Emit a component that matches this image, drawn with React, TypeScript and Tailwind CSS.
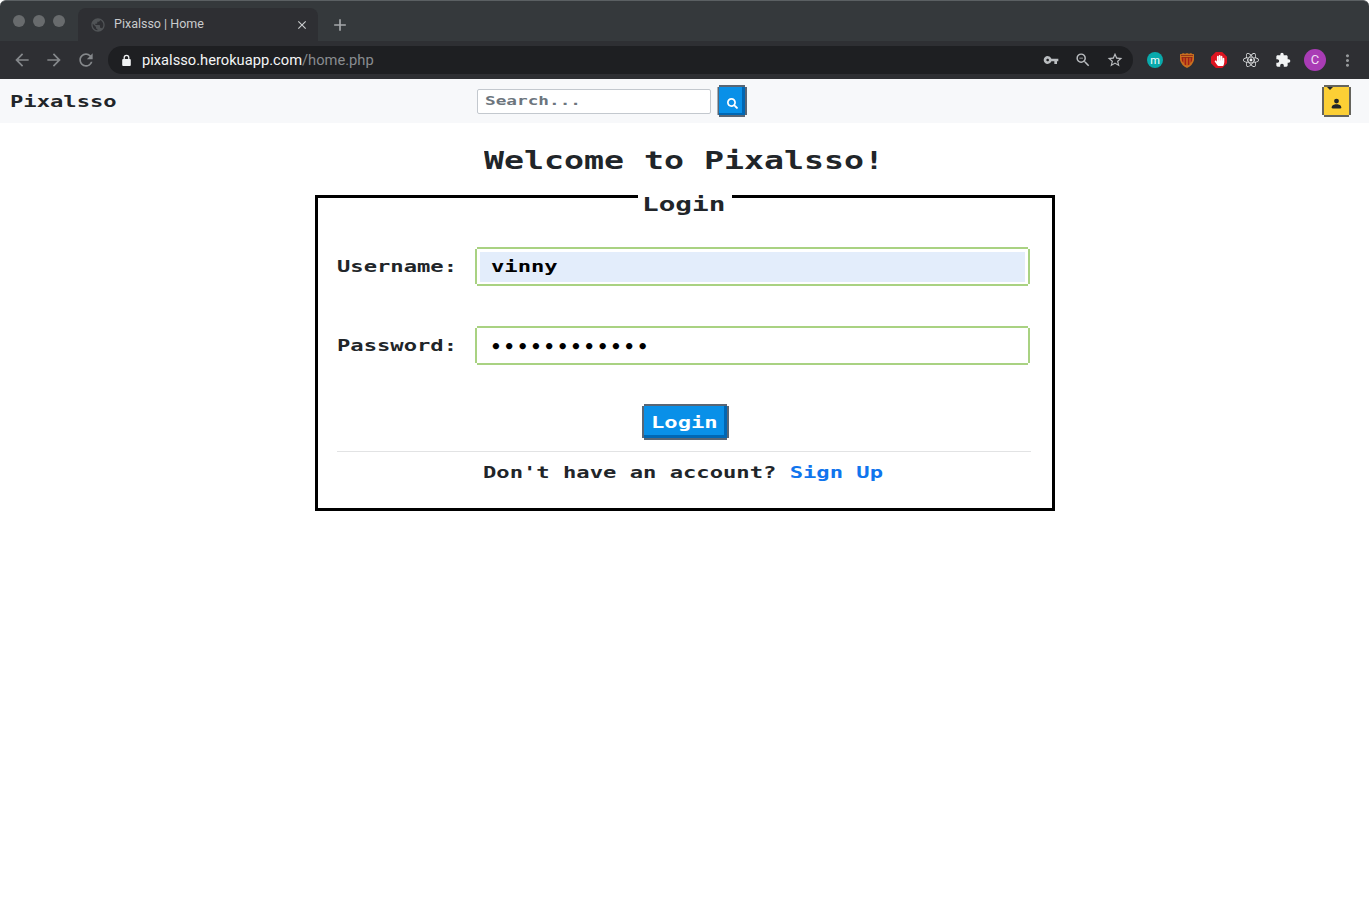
import React from "react";
import {
  MdAdd, MdArrowBack, MdArrowForward, MdClose, MdExtension, MdMoreVert,
  MdPublic, MdRefresh, MdStarBorder, MdVpnKey, MdZoomOut,
} from "react-icons/md";
import { FaHandPaper, FaReact, FaSearch } from "react-icons/fa";
import { BsPersonFill } from "react-icons/bs";

function Wide({ children, className = "" }: { children: React.ReactNode; className?: string }) {
  return (
    <span className={`block origin-left scale-x-[1.384] whitespace-pre font-['DejaVu_Sans_Mono','Liberation_Mono',monospace] font-bold ${className}`}>
      {children}
    </span>
  );
}

function Shield() {
  return (
    <svg className="size-4" viewBox="0 0 16 16">
      <path d="M1 2q2 .5 3-1 2 1.500 4 0 2 1.500 4 0 1 1.500 3 1v6q-1 5-7 8-6-3-7-8z" fill="#c9701f" />
      <path d="M2.500 5h2v6l-1.500-2zM5.500 5h1.800v8.500l-1.800-1zM8.700 5h1.800v7.500l-1.800 1zM11.500 5h2l-.5 4-1.500 2z" fill="#a51d16" />
      <path d="M2 3.500h12M3 5.500h10" stroke="#8c2a18" strokeWidth=".8" />
    </svg>
  );
}

function Padlock() {
  return (
    <svg className="h-[13px] w-[13px]" viewBox="0 0 13 13">
      <rect x="2.200" y="5" width="8.600" height="7" rx="1" fill="#f1f3f4" />
      <path d="M4.200 5.500V3.600a2.300 2.300 0 0 1 4.600 0v1.900" fill="none" stroke="#f1f3f4" strokeWidth="1.300" />
    </svg>
  );
}

function BrowserChrome() {
  return (
    <header className="h-[79px] overflow-hidden rounded-t-md border-t border-[#5b6063] bg-[#35393c] font-[Roboto,sans-serif]">
      <div className="flex h-10 items-end">
        <div className="flex w-[78px] gap-2 self-start pl-[13px] pt-[14px]">
          <span className="size-3 rounded-full bg-[#686b6d]" />
          <span className="size-3 rounded-full bg-[#686b6d]" />
          <span className="size-3 rounded-full bg-[#686b6d]" />
        </div>
        <div className="flex h-[33px] w-60 items-center rounded-t-lg bg-[#2e2f33] pl-3">
          <MdPublic className="size-4 text-[#505356]" />
          <span className="ml-2 flex-1 text-[12.5px] text-[#c9cbcd]">Pixalsso | Home</span>
          <MdClose className="mr-[9px] size-[14px] text-[#c9cbcd]" />
        </div>
        <div className="flex h-[33px] items-center pl-3">
          <MdAdd className="size-5 text-[#a5a8aa]" />
        </div>
      </div>
      <div className="flex h-[38px] items-center bg-[#2e2f33] pl-3">
        <MdArrowBack className="size-5 text-[#85888b]" />
        <MdArrowForward className="ml-3 size-5 text-[#85888b]" />
        <MdRefresh className="ml-3 size-5 text-[#85888b]" />
        <div className="ml-3 flex h-7 w-[1025px] items-center rounded-full bg-[#1e1f22] pl-3">
          <Padlock />
          <span className="ml-[9px] flex-1 text-[14.7px] text-[#898c90]">
            <span className="text-[#f4f5f6]">pixalsso.herokuapp.com</span>/home.php
          </span>
          <div className="flex gap-4 pr-2.5 text-[#babdc0]">
            <MdVpnKey className="size-4" />
            <MdZoomOut className="size-4 scale-110" />
            <MdStarBorder className="size-4 scale-110" />
          </div>
        </div>
        <div className="ml-3.5 flex items-center">
          <span className="flex size-4 items-center justify-center rounded-full bg-[#09aaac] text-[11px] leading-none text-white">m</span>
          <span className="ml-4"><Shield /></span>
          <span className="ml-4 flex size-4 items-center justify-center bg-[#dc1420] [clip-path:polygon(30%_0,70%_0,100%_30%,100%_70%,70%_100%,30%_100%,0_70%,0_30%)]">
            <FaHandPaper className="size-[11px] text-white" />
          </span>
          <FaReact className="ml-4 size-4 text-[#f1f3f4]" />
          <MdExtension className="ml-4 size-4 text-[#f1f3f4]" />
          <span className="ml-[13px] flex size-[22px] items-center justify-center rounded-full bg-[#a93cb5] text-[13px] text-[#f1dff3]">C</span>
          <MdMoreVert className="ml-3 size-[19px] text-[#96999b]" />
        </div>
      </div>
    </header>
  );
}

function Navbar() {
  return (
    <nav className="flex h-11 items-center bg-[#f7f8fa]">
      <div className="w-[477px] pl-2.5 pt-0.5">
        <Wide className="w-20 text-[16px] text-[#212529]">Pixalsso</Wide>
      </div>
      <div className="flex h-[25px] w-[234px] items-center rounded-[2px] border border-[#c3c8ce] bg-white pl-[7px]">
        <Wide className="w-20 text-[12.800px] text-[#6c757d]">Search...</Wide>
      </div>
      <button className="ml-2 flex h-7 w-[26px] items-center justify-center bg-[#0990e8] pt-1 text-white shadow-[inset_-3px_-2px_#0067b4,0_-2px_#596675,0_2px_#596675,-1.500px_0_#596675,2px_0_#596675]">
        <FaSearch className="size-[11px]" />
      </button>
      <button className="relative ml-auto mr-5 flex h-7 w-[25px] items-center justify-center bg-[#fccf35] pt-1 text-[#212529] shadow-[0_-2px_#65645d,0_2px_#65645d,-2px_0_#65645d,2px_0_#65645d]">
        <span className="absolute left-[3px] top-0 size-0 border-x-[3px] border-t-[3px] border-x-transparent border-t-[#212529]" />
        <BsPersonFill className="size-[13px]" />
      </button>
    </nav>
  );
}

function Field({ label, filled, children }: { label: string; filled?: boolean; children: React.ReactNode }) {
  return (
    <div className="flex h-[39px] items-center">
      <div className="w-[140px]">
        <Wide className="w-[87px] text-[16px] text-[#212529]">{label}</Wide>
      </div>
      <div className="h-[35px] w-[551px] p-[3px] shadow-[0_-2px_#a9d282,0_2px_#a9d282,-2px_0_#a9d282,2px_0_#a9d282]">
        <div className={filled ? "flex h-[30px] items-center bg-[#e3edfb] pl-[11px]" : "flex h-[30px] items-center pl-[11px]"}>
          {children}
        </div>
      </div>
    </div>
  );
}

export default function App() {
  return (
    <div className="h-[917px] w-[1369px] overflow-hidden bg-white">
      <BrowserChrome />
      <Navbar />
      <main className="flex flex-col items-center">
        <h1 className="mt-[22px] h-8 w-[402px]">
          <Wide className="w-[290px] text-[24px] leading-8 text-[#212529]">Welcome to Pixalsso!</Wide>
        </h1>
        <section className="mt-[18px] h-[316px] w-[740px] border-[3px] border-black px-[19px]">
          <h2 className="mx-auto -mt-2 h-7 w-[94px] bg-white pl-1">
            <Wide className="w-[61px] text-[20px] leading-7 text-[#212529]">Login</Wide>
          </h2>
          <div className="mt-[29px]">
            <Field label="Username:" filled>
              <Wide className="w-12 text-[16px] text-black">vinny</Wide>
            </Field>
          </div>
          <div className="mt-10">
            <Field label="Password:">
              <span className="font-['DejaVu_Sans_Mono',monospace] text-[18px] font-bold tracking-[2.500px] text-black">••••••••••••</span>
            </Field>
          </div>
          <button className="mx-auto mt-[41px] flex h-8 w-[83px] translate-x-px items-center bg-[#0990e8] pl-[7px] pt-0.5 text-white shadow-[inset_-3px_-3px_#0067b4,0_-2px_#596675,0_2px_#596675,-2px_0_#596675,2px_0_#596675]">
            <Wide className="w-12 text-left text-[16px]">Login</Wide>
          </button>
          <hr className="mt-[13px] w-[694px] border-[#e2e3e4]" />
          <p className="ml-[146px] mt-[9px] h-6">
            <Wide className="w-[290px] text-[16px] leading-6 text-[#212529]">
              Don't have an account? <a className="text-[#1075ed]">Sign Up</a>
            </Wide>
          </p>
        </section>
      </main>
    </div>
  );
}
